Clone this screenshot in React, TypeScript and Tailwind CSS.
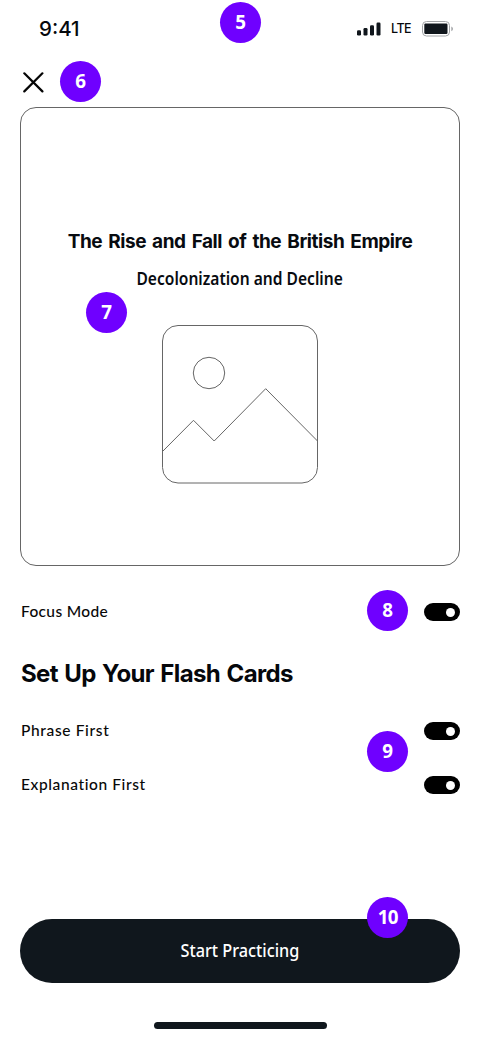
import type { ReactNode } from "react";

function Badge({ n, className }: { n: number; className: string }) {
  return (
    <span
      className={`absolute flex size-[41px] items-center justify-center rounded-full bg-[#6f00ff] font-['Noto_Sans','Open_Sans',sans-serif] text-[20px] leading-none font-bold text-white ${className}`}
    >
      <span className="-mt-px scale-x-[0.94] tracking-[-0.8px]">{n}</span>
    </span>
  );
}

function StatusBar() {
  return (
    <header className="relative flex h-[58px] items-center justify-between pr-[26px] pl-[39px]">
      <span className="font-['Inter',sans-serif] text-[20.5px] leading-none font-medium text-[#05080c]">
        9:41
      </span>
      <div className="flex items-center">
        <svg width="24" height="14" viewBox="0 0 24 14" fill="#10161c">
          <rect x="0" y="8.3" width="4" height="5.2" rx="1.2" />
          <rect x="6.5" y="6" width="4" height="7.5" rx="1.2" />
          <rect x="13" y="3.2" width="4" height="10.3" rx="1.2" />
          <rect x="19.5" y="0.5" width="4" height="13" rx="1.2" />
        </svg>
        <span className="ml-[10px] w-[31px] font-['Inter',sans-serif] text-[12.5px] leading-none font-medium tracking-[-0.5px] text-[#05080c]">
          LTE
        </span>
        <svg width="32" height="16" viewBox="0 0 32 16">
          <rect x="0.5" y="0.5" width="27" height="14.5" rx="4" fill="none" stroke="#a2a4a7" />
          <rect x="2.3" y="2.6" width="23.2" height="10.4" rx="1.2" fill="#10161c" />
          <path d="M29.3 5.5c2.2.8 2.2 3.9 0 4.7z" fill="#a2a4a7" />
        </svg>
      </div>
      <Badge n={5} className="top-[2px] left-[220px]" />
    </header>
  );
}

function Toggle() {
  return (
    <span className="flex h-[18px] w-[36px] items-center justify-end rounded-full bg-black pr-[5px]">
      <span className="size-[9px] rounded-full bg-white" />
    </span>
  );
}

function SettingRow({ label, tracking, children }: { label: string; tracking: string; children?: ReactNode }) {
  return (
    <div className="relative flex h-[54px] items-center justify-between">
      <span
        className={`pl-px font-['Lato',sans-serif] text-[15.5px] leading-none font-medium whitespace-nowrap text-[#080808] ${tracking}`}
      >
        {label}
      </span>
      <Toggle />
      {children}
    </div>
  );
}

export default function App() {
  return (
    <main className="flex h-[1039px] w-[480px] flex-col overflow-hidden bg-white">
      <StatusBar />
      <div className="relative flex h-[49px] items-center pl-[23px]">
        <svg width="21" height="21" viewBox="0 0 21 21" fill="none" stroke="#050505" strokeWidth="2.2" strokeLinecap="round" aria-label="Close">
          <path d="M1.3 1.3 19.4 19.4M19.4 1.3 1.3 19.4" />
        </svg>
        <Badge n={6} className="top-[3px] left-[60px]" />
      </div>
      <section className="relative mx-[20px] flex h-[459px] shrink-0 flex-col items-center rounded-[16px] border border-[#666] pt-[120px]">
        <h1 className="flex h-[26px] items-center font-['Inter',sans-serif] text-[19px] leading-none font-bold tracking-[-0.45px] [word-spacing:2px] whitespace-nowrap text-[#080b10]">
          The Rise and Fall of the British Empire
        </h1>
        <h2 className="mt-[12px] flex h-[24px] scale-x-[0.916] items-center font-['Noto_Sans',sans-serif] text-[17px] leading-none font-semibold whitespace-nowrap text-[#080b10]">
          Decolonization and Decline
        </h2>
        <svg className="mt-[35px]" width="156" height="159" viewBox="0 0 156 159" fill="none" stroke="#666" strokeWidth="1">
          <rect x="0.5" y="0.5" width="155" height="157.5" rx="15.5" />
          <circle cx="47" cy="48" r="15.7" />
          <path d="M.5 126.5 31.5 95.3 52.2 116 103.7 63.7 155.5 116" />
        </svg>
        <Badge n={7} className="top-[184px] left-[65px]" />
      </section>
      <section className="flex flex-col px-[20px] pt-[19px]">
        <SettingRow label="Focus Mode" tracking="tracking-[0.35px]">
          <Badge n={8} className="top-[5px] left-[347px]" />
        </SettingRow>
        <h2 className="mt-[19px] flex h-[32px] items-center pl-px font-['Inter',sans-serif] text-[24px] leading-none font-bold tracking-[-0.6px] [word-spacing:1.2px] whitespace-nowrap text-[#05070b]">
          Set Up Your Flash Cards
        </h2>
        <div className="relative mt-[14px]">
          <SettingRow label="Phrase First" tracking="tracking-[0.65px]" />
          <SettingRow label="Explanation First" tracking="tracking-[0.6px]" />
          <Badge n={9} className="top-[27px] left-[347px]" />
        </div>
      </section>
      <footer className="relative mt-auto flex flex-col items-center px-[20px] pb-[10px]">
        <button className="flex h-[64px] w-full items-center justify-center rounded-full bg-[#10171d] font-['Noto_Sans',sans-serif] text-[17.5px] leading-none font-medium text-white">
          <span className="inline-block scale-x-[0.93]">Start Practicing</span>
        </button>
        <span className="mt-[39px] h-[7px] w-[173px] rounded-full bg-[#10171d]" />
        <Badge n={10} className="-top-[22px] left-[367px]" />
      </footer>
    </main>
  );
}
